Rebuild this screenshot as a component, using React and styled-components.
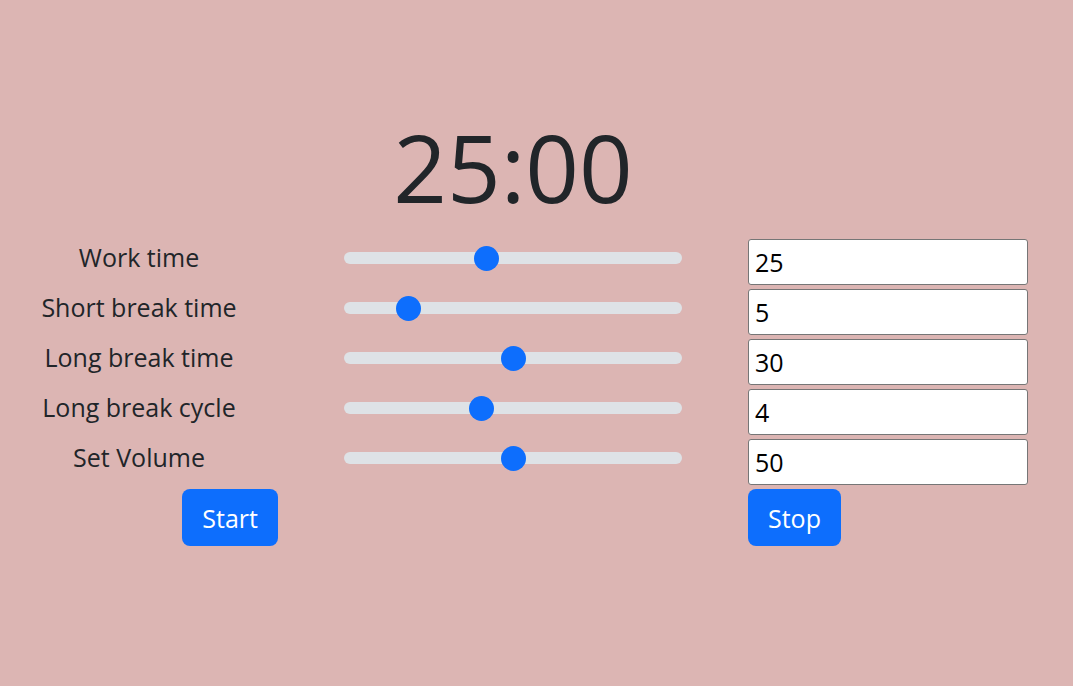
import React, { useState } from 'react';
import styled, { createGlobalStyle } from 'styled-components';

const GlobalStyle = createGlobalStyle`
  html, body {
    margin: 0;
    padding: 0;
    background: #dcb5b3;
  }
  body {
    font-family: "Open Sans", "Noto Sans", sans-serif;
    color: #212529;
  }
`;

const Page = styled.div`
  min-height: 100vh;
  padding-top: 110px;
  box-sizing: border-box;
`;

const Board = styled.div`
  display: grid;
  grid-template-columns: 278px 338px 280px;
  column-gap: 66px;
  row-gap: 4px;
`;

const Timer = styled.h1`
  grid-column: 2;
  margin: 0 0 10px;
  font-size: 94px;
  font-weight: 400;
  line-height: 115px;
  text-align: center;
  color: #212529;
`;

const Label = styled.label`
  grid-column: 1;
  align-self: start;
  font-size: 25px;
  line-height: 36px;
  text-align: center;
`;

const Slider = styled.input`
  -webkit-appearance: none;
  appearance: none;
  align-self: start;
  width: 100%;
  height: 38px;
  margin: 0;
  background: transparent;

  &::-webkit-slider-runnable-track {
    height: 12px;
    border-radius: 6px;
    background: #dee2e6;
  }
  &::-webkit-slider-thumb {
    -webkit-appearance: none;
    width: 25px;
    height: 25px;
    margin-top: -6.5px;
    border: none;
    border-radius: 50%;
    background: #0d6efd;
  }
  &::-moz-range-track {
    height: 12px;
    border-radius: 6px;
    background: #dee2e6;
  }
  &::-moz-range-thumb {
    width: 25px;
    height: 25px;
    border: none;
    border-radius: 50%;
    background: #0d6efd;
  }
`;

const NumberBox = styled.input`
  box-sizing: border-box;
  width: 100%;
  height: 46px;
  padding: 0 6px;
  border: 1px solid #767676;
  border-radius: 3px;
  background: #fff;
  color: #000;
  font-family: inherit;
  font-size: 25px;
  outline: none;
`;

const Button = styled.button`
  grid-column: ${props => (props.end ? 1 : 3)};
  justify-self: ${props => (props.end ? 'end' : 'start')};
  height: 57px;
  padding: 0 20px;
  border: none;
  border-radius: 8px;
  background: #0d6efd;
  color: #fff;
  font-family: inherit;
  font-size: 25px;
  cursor: pointer;
`;

const settings = [
  { key: 'work', label: 'Work time', value: 25, max: 60 },
  { key: 'short', label: 'Short break time', value: 5, max: 30 },
  { key: 'long', label: 'Long break time', value: 30, max: 60 },
  { key: 'cycle', label: 'Long break cycle', value: 4, max: 10 },
  { key: 'volume', label: 'Set Volume', value: 50, max: 100 }
];

export default function App() {
  const [values, setValues] = useState(
    settings.reduce((acc, s) => ({ ...acc, [s.key]: s.value }), {})
  );

  const update = (key, v) => setValues(prev => ({ ...prev, [key]: v }));
  const minutes = String(values.work).padStart(2, '0');

  return (
    <Page>
      <GlobalStyle />
      <Board>
        <Timer>{minutes}:00</Timer>
        {settings.map(s => (
          <React.Fragment key={s.key}>
            <Label htmlFor={s.key}>{s.label}</Label>
            <Slider
              id={s.key}
              type="range"
              min="0"
              max={s.max}
              value={values[s.key]}
              onChange={e => update(s.key, Number(e.target.value))}
            />
            <NumberBox
              type="text"
              value={values[s.key]}
              onChange={e => update(s.key, e.target.value)}
            />
          </React.Fragment>
        ))}
        <Button end>Start</Button>
        <Button>Stop</Button>
      </Board>
    </Page>
  );
}
